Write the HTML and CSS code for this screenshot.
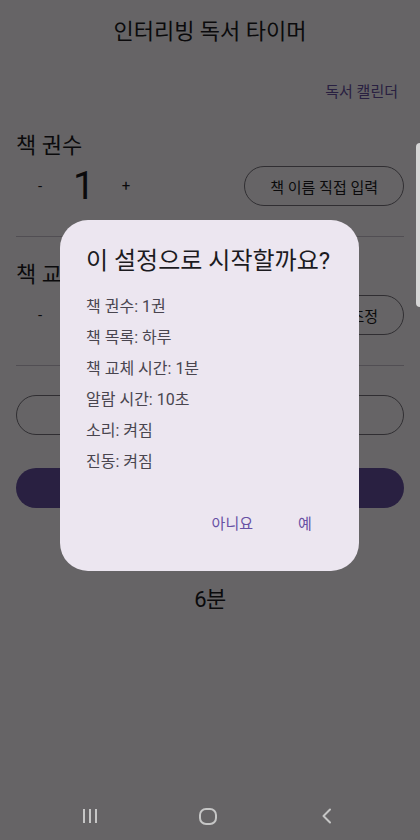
FILE: index.html
```html
<!DOCTYPE html>
<html lang="ko">
<head>
<meta charset="utf-8">
<title>인터리빙 독서 타이머</title>
<link rel="stylesheet" href="styles.css">
</head>
<body>
<div class="screen">
  <header class="appbar"><h1 class="title">인터리빙 독서 타이머</h1></header>
  <div class="link-row"><span class="link">독서 캘린더</span></div>

  <section class="section">
    <h2 class="label">책 권수</h2>
    <div class="row">
      <span class="step">-</span>
      <span class="count">1</span>
      <span class="step plus">+</span>
      <button class="outline">책 이름 직접 입력</button>
    </div>
  </section>
  <hr class="divider">

  <section class="section">
    <h2 class="label">책 교체</h2>
    <div class="row">
      <span class="step">-</span>
      <button class="outline">시간 조정</button>
    </div>
  </section>
  <hr class="divider">

  <button class="wide outline" aria-label="책 목록 설정"></button>
  <button class="wide filled" aria-label="시작"></button>
  <p class="total">6분</p>

  <div class="scrim">
    <div class="dialog">
      <h3 class="dialog-title">이 설정으로 시작할까요?</h3>
      <ul class="summary">
        <li>책 권수: 1권</li>
        <li>책 목록: 하루</li>
        <li>책 교체 시간: 1분</li>
        <li>알람 시간: 10초</li>
        <li>소리: 켜짐</li>
        <li>진동: 켜짐</li>
      </ul>
      <div class="actions">
        <button class="text-btn">아니요</button>
        <button class="text-btn">예</button>
      </div>
    </div>
  </div>

  <nav class="navbar">
    <span class="nav-item">
      <svg width="16" height="16" viewBox="0 0 16 16" fill="none" stroke="currentColor" stroke-width="2"><path d="M2 1v14M8 1v14M14 1v14"/></svg>
    </span>
    <span class="nav-item">
      <svg width="18" height="17" viewBox="0 0 18 17" fill="none" stroke="currentColor" stroke-width="2"><rect x="1" y="1" width="16" height="15" rx="6"/></svg>
    </span>
    <span class="nav-item">
      <svg width="11" height="16" viewBox="0 0 11 16" fill="none" stroke="currentColor" stroke-width="2" stroke-linecap="round" stroke-linejoin="round"><path d="M9 1.5L2.5 8L9 14.5"/></svg>
    </span>
  </nav>

  <div class="edge-handle"></div>
</div>
</body>
</html>
```

FILE: styles.css
```css
* { box-sizing: border-box; }

html, body {
  margin: 0;
  padding: 0;
}

body {
  font-family: Roboto, "Noto Sans CJK KR", sans-serif;
  color: #1c1b1f;
  background: #666466;
}

.screen {
  position: relative;
  width: 420px;
  height: 840px;
  overflow: hidden;
  background: #fffbfe;
  display: flex;
  flex-direction: column;
  padding: 0 16px;
}

.appbar {
  height: 64px;
  display: flex;
  align-items: center;
  justify-content: center;
}

.title {
  margin: 0;
  font-size: 22px;
  font-weight: 400;
  line-height: 30px;
}

.link-row {
  margin-top: 8px;
  height: 36px;
  display: flex;
  align-items: center;
  justify-content: flex-end;
  padding-right: 6px;
}

.link {
  font-size: 15px;
  color: #6750a4;
}

.section {
  display: flex;
  flex-direction: column;
}

.label {
  margin: 24px 0 0;
  font-size: 22px;
  font-weight: 400;
  line-height: 28px;
}

.row {
  margin-top: 6px;
  height: 40px;
  display: flex;
  align-items: center;
}

.step {
  width: 48px;
  text-align: center;
  font-size: 15px;
}

.step.plus {
  width: 44px;
}

.count {
  width: 40px;
  text-align: center;
  font-size: 39px;
  line-height: 40px;
}

button {
  font-family: inherit;
  cursor: pointer;
}

.outline {
  margin-left: auto;
  height: 40px;
  padding: 0 25px;
  border: 1px solid #79747e;
  border-radius: 20px;
  background: transparent;
  color: #1c1b1f;
  font-size: 15px;
}

.divider {
  margin: 30px 0 0;
  border: 0;
  height: 1px;
  background: #cac4d0;
}

.wide {
  margin-left: 0;
  width: 100%;
  height: 40px;
  border-radius: 20px;
  font-size: 15px;
}

.wide.outline {
  margin-top: 29px;
}

.wide.filled {
  margin-top: 33px;
  border: 0;
  background: #6750a4;
  color: #ffffff;
}

.total {
  margin: 77px 0 0;
  text-align: center;
  font-size: 22px;
  line-height: 30px;
  letter-spacing: -0.5px;
}

.scrim {
  position: absolute;
  inset: 0;
  background: rgba(0, 0, 0, 0.6);
  z-index: 1;
}

.dialog {
  position: absolute;
  left: 60px;
  top: 220px;
  width: 299px;
  padding: 25px 22px 29px 26px;
  background: #ece6f0;
  border-radius: 28px;
}

.dialog-title {
  margin: 0;
  font-size: 24px;
  font-weight: 400;
  line-height: 32px;
  color: #1c1b1f;
}

.summary {
  margin: 14px 0 0;
  padding: 0;
  list-style: none;
  font-size: 16px;
  line-height: 31px;
  color: #49454f;
}

.actions {
  margin-top: 25px;
  display: flex;
  justify-content: flex-end;
  gap: 8px;
}

.text-btn {
  min-width: 64px;
  height: 40px;
  padding: 0 12px;
  border: 0;
  background: transparent;
  color: #6750a4;
  font-size: 15px;
}

.navbar {
  position: relative;
  z-index: 2;
  margin: auto -16px 0;
  height: 48px;
  padding-right: 4px;
  display: flex;
  justify-content: center;
  align-items: center;
  color: #c6c6c6;
}

.nav-item {
  width: 118px;
  display: flex;
  justify-content: center;
  align-items: center;
}

.edge-handle {
  position: absolute;
  right: 0;
  top: 143px;
  width: 4px;
  height: 164px;
  background: #d6d6d6;
  border-radius: 4px 0 0 4px;
  z-index: 3;
}
```
